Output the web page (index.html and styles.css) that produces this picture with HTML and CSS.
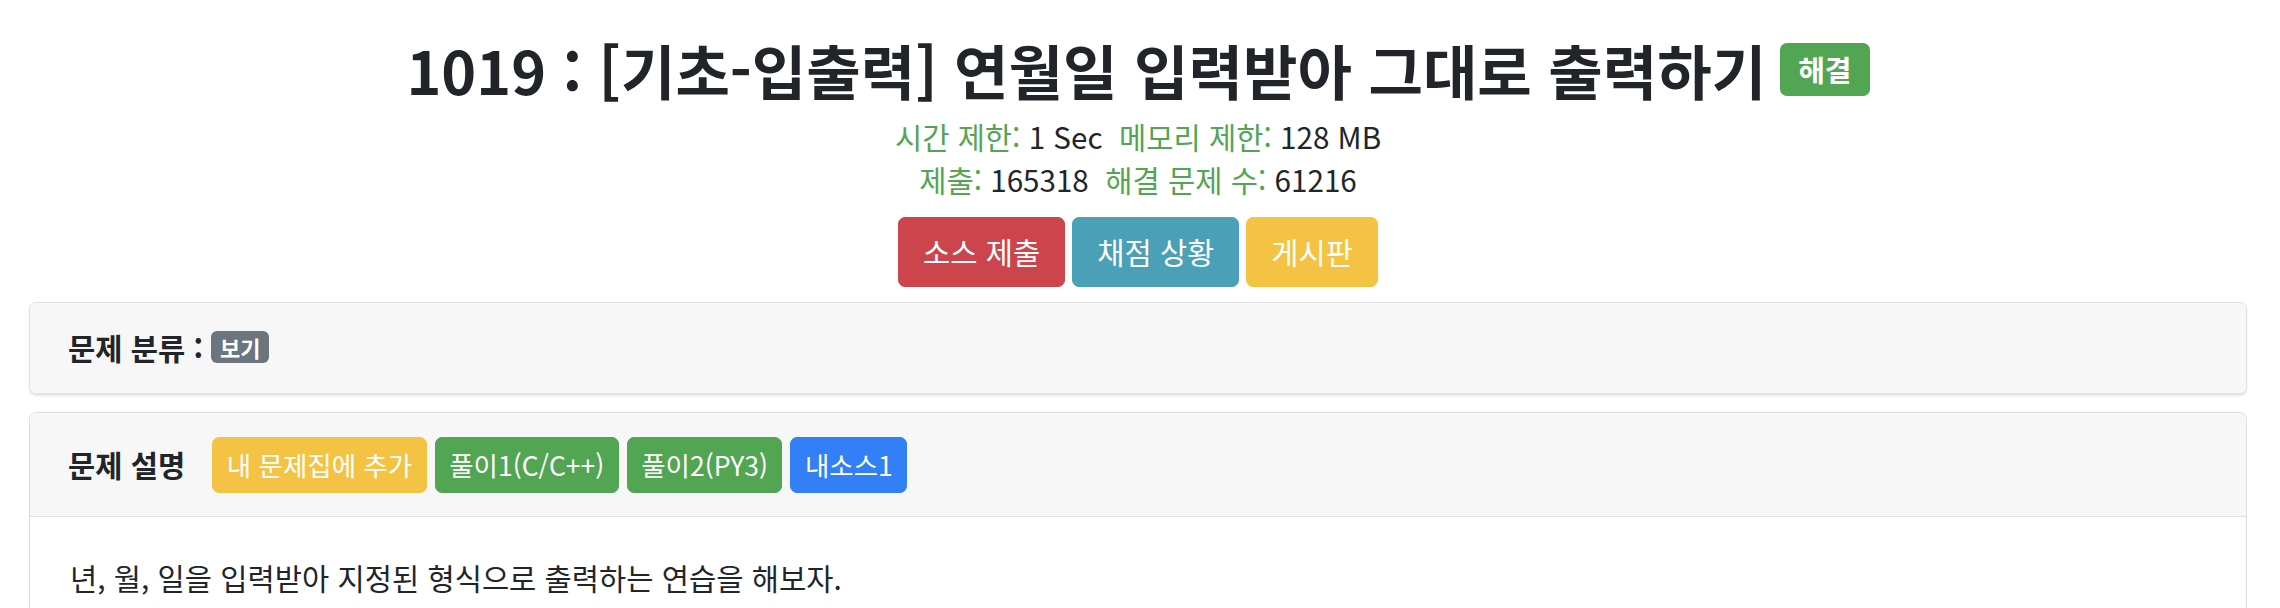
FILE: index.html
```html
<!DOCTYPE html>
<html lang="ko">
<head>
<meta charset="utf-8">
<title>1019 : [기초-입출력] 연월일 입력받아 그대로 출력하기</title>
<link rel="stylesheet" href="styles.css">
</head>
<body>
<div class="container">
  <div class="problem-head">
    <h1 class="title">1019 : [기초-입출력] 연월일 입력받아 그대로 출력하기 <span class="badge badge-success">해결</span></h1>
    <div class="meta">
      <div><span class="label">시간 제한:</span> 1 Sec&nbsp;&nbsp;<span class="label">메모리 제한:</span> 128 MB</div>
      <div><span class="label">제출:</span> 165318&nbsp;&nbsp;<span class="label">해결 문제 수:</span> 61216</div>
    </div>
    <div class="actions">
      <a class="btn btn-danger">소스 제출</a>
      <a class="btn btn-info">채점 상황</a>
      <a class="btn btn-warning">게시판</a>
    </div>
  </div>

  <div class="card card-shadow">
    <div class="card-header">
      <span class="card-title">문제 분류 : <span class="badge badge-secondary">보기</span></span>
    </div>
  </div>

  <div class="card">
    <div class="card-header header-row">
      <span class="card-title">문제 설명</span>
      <div class="header-btns">
        <a class="btn btn-sm btn-warning">내 문제집에 추가</a>
        <a class="btn btn-sm btn-success">풀이1(C/C++)</a>
        <a class="btn btn-sm btn-success">풀이2(PY3)</a>
        <a class="btn btn-sm btn-primary">내소스1</a>
      </div>
    </div>
    <div class="card-body">
      <p class="desc">년, 월, 일을 입력받아 지정된 형식으로 출력하는 연습을 해보자.</p>
    </div>
  </div>
</div>
</body>
</html>
```

FILE: styles.css
```css
html, body {
  margin: 0;
  padding: 0;
  background: #ffffff;
}

body {
  font-family: "Noto Sans CJK KR", "Noto Sans", sans-serif;
  font-size: 29.6px;
  line-height: 1.5;
  color: #212529;
  overflow: hidden;
}

.container {
  padding: 0 33px 0 29px;
}

.problem-head {
  display: flex;
  flex-direction: column;
  align-items: center;
  padding-top: 34px;
}

.title {
  margin: 0;
  font-size: 59.2px;
  font-weight: 700;
  line-height: 71px;
  color: #212529;
  display: flex;
  align-items: center;
  gap: 14px;
}

.badge {
  display: inline-block;
  font-weight: 700;
  color: #ffffff;
  line-height: 1;
  white-space: nowrap;
}

.badge-success {
  background: #52a552;
  font-size: 29px;
  line-height: 29px;
  padding: 12px 18px;
  border-radius: 7px;
}

.badge-secondary {
  background: #6c757d;
  font-size: 22px;
  padding: 5px 8.5px;
  border-radius: 6px;
  vertical-align: 3px;
}

.meta {
  margin-top: 10px;
  text-align: center;
  line-height: 43px;
}

.label {
  color: #52a552;
}

.actions {
  display: flex;
  gap: 7px;
  margin-top: 16px;
}

.btn {
  display: inline-block;
  color: #ffffff;
  font-size: 29.6px;
  line-height: 44.4px;
  padding: 12px 24px;
  border: 1px solid transparent;
  border-radius: 7px;
  white-space: nowrap;
  text-decoration: none;
}

.btn-sm {
  font-size: 26.5px;
  line-height: 40px;
  padding: 7px 13.5px;
}

.btn-danger { background: #cc454d; border-color: #cc454d; }
.btn-info { background: #4aa0b6; border-color: #4aa0b6; }
.btn-warning { background: #f5c343; border-color: #f5c343; }
.btn-success { background: #52a552; border-color: #52a552; }
.btn-primary { background: #337ff6; border-color: #337ff6; }

.card {
  border: 1px solid #dfdfdf;
  border-radius: 7px;
  background: #ffffff;
  overflow: hidden;
  margin-bottom: 18px;
}

.problem-head + .card {
  margin-top: 15px;
}

.card-shadow {
  box-shadow: 0 2px 2px rgba(0, 0, 0, 0.1);
}

.card-header {
  background: #f7f7f7;
  padding: 23.5px 38px;
  line-height: 44.4px;
}

.card-shadow .card-header {
  padding: 22.8px 38px;
}

.header-row {
  display: flex;
  align-items: center;
  border-bottom: 1px solid #dfdfdf;
}

.card-title {
  font-weight: 700;
}

.header-btns {
  display: flex;
  gap: 8px;
  margin-left: 27px;
  font-weight: 400;
}

.card-body {
  padding: 38.5px 40px;
}

.desc {
  margin: 0;
  line-height: 44.4px;
}
```
